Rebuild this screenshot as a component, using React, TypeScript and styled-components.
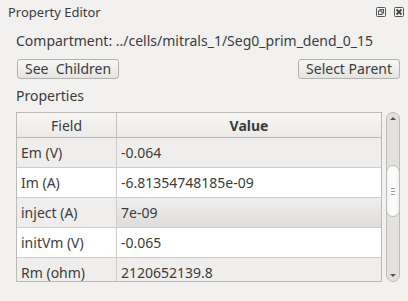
import React from 'react';
import styled, { createGlobalStyle } from 'styled-components';

const GlobalStyle = createGlobalStyle`
  html, body {
    margin: 0;
    padding: 0;
    background: #f2f1f0;
  }
  * {
    box-sizing: border-box;
  }
`;

const Dock = styled.div`
  width: 408px;
  height: 301px;
  overflow: hidden;
  background: #f2f1f0;
  color: #3c3c3c;
  font-family: 'Noto Sans', 'Open Sans', sans-serif;
  font-size: 14px;
  display: flex;
  flex-direction: column;
`;

const TitleBar = styled.div`
  height: 23px;
  display: flex;
  align-items: center;
  justify-content: space-between;
  padding: 0 4px 0 8px;
  font-size: 13px;
`;

const TitleIcons = styled.div`
  display: flex;
  gap: 8px;
  align-items: center;
`;

const Body = styled.div`
  flex: 1;
  display: flex;
  flex-direction: column;
  padding: 8px 8px 0 16px;
`;

const Label = styled.div`
  height: 20px;
  line-height: 20px;
  white-space: nowrap;
`;

const ButtonRow = styled.div`
  display: flex;
  justify-content: space-between;
  margin-top: 8px;
  padding-left: 1px;
`;

const Button = styled.button`
  height: 20px;
  padding: 0 7px;
  font: inherit;
  line-height: 18px;
  color: #3c3c3c;
  border: 1px solid #b4b2ae;
  border-radius: 3px;
  background: linear-gradient(#f8f8f7, #e5e4e2);
  white-space: pre;
`;

const SectionLabel = styled(Label)`
  margin-top: 7px;
`;

const TableArea = styled.div`
  display: flex;
  gap: 4px;
  margin-top: 6px;
`;

const Table = styled.div`
  width: 367px;
  height: 170px;
  border: 1px solid #bcbab7;
  overflow: hidden;
  display: grid;
  grid-template-columns: 99px 1fr;
  grid-auto-rows: 30px;
  grid-template-rows: 25px;
  align-content: start;
`;

const HeaderCell = styled.div<{ $bold?: boolean }>`
  background: linear-gradient(#f7f6f5, #ebeae8);
  border-bottom: 1px solid #bcbab7;
  border-left: ${p => (p.$bold ? '1px solid #c4c2bf' : 'none')};
  display: flex;
  align-items: center;
  justify-content: center;
  font-weight: ${p => (p.$bold ? 700 : 400)};
`;

const Cell = styled.div<{ $alt?: boolean; $hot?: boolean; $value?: boolean }>`
  background: ${p =>
    p.$hot
      ? 'linear-gradient(#efeeed, #dedddb)'
      : p.$alt
        ? '#efeeed'
        : '#ffffff'};
  border-bottom: 1px solid #cfcdca;
  border-left: ${p => (p.$value ? '1px solid #cfcdca' : 'none')};
  display: flex;
  align-items: center;
  padding-left: 4px;
  white-space: nowrap;
  overflow: hidden;
`;

const ScrollTrack = styled.div`
  position: relative;
  width: 14px;
  height: 170px;
  border: 1px solid #bdbbb8;
  border-radius: 7px;
  background: #e2e1df;
  display: flex;
  flex-direction: column;
  justify-content: space-between;
  align-items: center;
  padding: 4px 0;
`;

const Arrow = styled.div<{ $down?: boolean }>`
  width: 0;
  height: 0;
  border-left: 3px solid transparent;
  border-right: 3px solid transparent;
  ${p =>
    p.$down
      ? 'border-top: 3px solid #555;'
      : 'border-bottom: 3px solid #555;'}
`;

const Thumb = styled.div`
  position: absolute;
  left: -1px;
  top: 52px;
  width: 14px;
  height: 52px;
  border: 1px solid #bdbbb8;
  border-radius: 7px;
  background: linear-gradient(90deg, #f4f4f3, #ffffff 60%, #f0f0ef);
  display: flex;
  flex-direction: column;
  align-items: center;
  justify-content: center;
  gap: 2px;

  > span {
    width: 4px;
    height: 1px;
    background: #9c9a97;
  }
`;

const rows = [
  { field: 'Em (V)', value: '-0.064' },
  { field: 'Im (A)', value: '-6.81354748185e-09' },
  { field: 'inject (A)', value: '7e-09', hot: true },
  { field: 'initVm (V)', value: '-0.065' },
  { field: 'Rm (ohm)', value: '2120652139.8' },
];

const FloatIcon = () => (
  <svg width="10" height="10" viewBox="0 0 10 10">
    <rect x="0.5" y="0.5" width="9" height="9" rx="1" fill="none" stroke="#555" />
    <rect x="4" y="2.5" width="3.5" height="3.5" fill="none" stroke="#555" />
    <rect x="2.5" y="4" width="3.5" height="3.5" fill="#f2f1f0" stroke="#555" />
  </svg>
);

const CloseIcon = () => (
  <svg width="10" height="10" viewBox="0 0 10 10">
    <rect x="0.5" y="0.5" width="9" height="9" rx="1" fill="none" stroke="#555" />
    <path d="M2.5 2.5 L7.5 7.5 M7.5 2.5 L2.5 7.5" stroke="#444" strokeWidth="1.8" />
  </svg>
);

export default function App() {
  return (
    <>
      <GlobalStyle />
      <Dock>
        <TitleBar>
          <span>Property Editor</span>
          <TitleIcons>
            <FloatIcon />
            <CloseIcon />
          </TitleIcons>
        </TitleBar>
        <Body>
          <Label>Compartment: ../cells/mitrals_1/Seg0_prim_dend_0_15</Label>
          <ButtonRow>
            <Button>{'See  Children'}</Button>
            <Button>Select Parent</Button>
          </ButtonRow>
          <SectionLabel>Properties</SectionLabel>
          <TableArea>
            <Table>
              <HeaderCell>Field</HeaderCell>
              <HeaderCell $bold>Value</HeaderCell>
              {rows.map((r, i) => (
                <React.Fragment key={r.field}>
                  <Cell $alt={i % 2 === 0}>{r.field}</Cell>
                  <Cell $alt={i % 2 === 0} $hot={r.hot} $value>
                    {r.value}
                  </Cell>
                </React.Fragment>
              ))}
            </Table>
            <ScrollTrack>
              <Arrow />
              <Thumb>
                <span />
                <span />
                <span />
              </Thumb>
              <Arrow $down />
            </ScrollTrack>
          </TableArea>
        </Body>
      </Dock>
    </>
  );
}
